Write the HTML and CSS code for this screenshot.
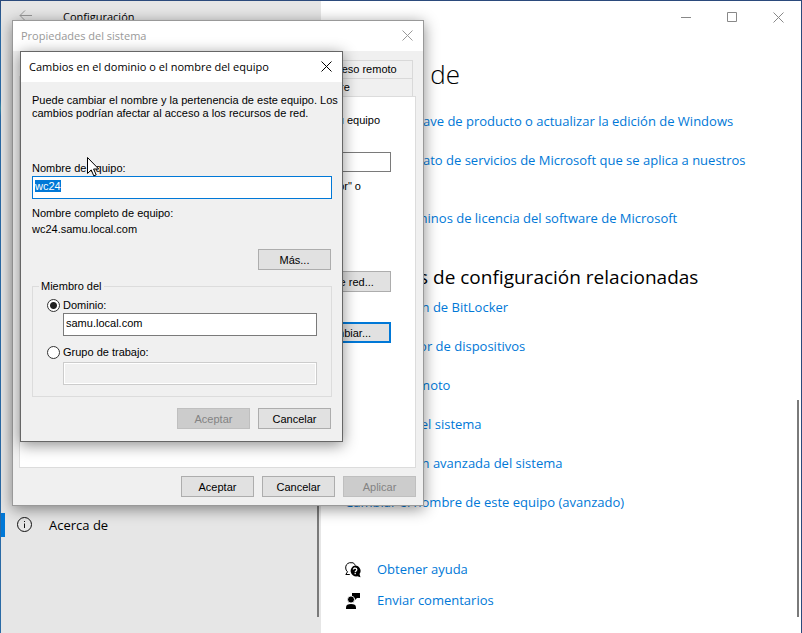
FILE: index.html
```html
<!DOCTYPE html>
<html lang="es">
<head>
<meta charset="utf-8">
<title>Configuración</title>
<link rel="stylesheet" href="styles.css">
</head>
<body>
<div class="settings">
  <aside class="sidebar">
    <div class="sidebar-column">
      <header class="sidebar-title">
        <button class="back" aria-label="Atrás"><svg width="14" height="12" viewBox="0 0 14 12"><path d="M13 5.500H1M6 .5L1 5.500l5 5" fill="none" stroke="#999"/></svg></button>
        <span>Configuración</span>
      </header>
      <nav class="nav">
        <a class="nav-item" href="#acerca">
          <svg width="16" height="16" viewBox="0 0 16 16"><circle cx="7.500" cy="7.500" r="7" fill="none" stroke="#111"/><path d="M7.500 6.500V11M7.500 4v1" stroke="#111"/></svg>
          <span>Acerca de</span>
        </a>
      </nav>
    </div>
    <div class="scroll scroll-nav"></div>
  </aside>

  <main class="main" id="acerca">
    <div class="main-column">
      <div class="window-controls">
        <button aria-label="Minimizar"><svg width="11" height="11" viewBox="0 0 11 11"><path d="M0 5.500h10" stroke="#888"/></svg></button>
        <button aria-label="Maximizar"><svg width="11" height="11" viewBox="0 0 11 11"><path d="M.5 .5h9v9h-9z" fill="none" stroke="#888"/></svg></button>
        <button aria-label="Cerrar"><svg width="11" height="11" viewBox="0 0 11 11"><path d="M.5 .5l10 10M10.500 .5l-10 10" stroke="#888"/></svg></button>
      </div>
      <div class="content">
        <h1>Acerca de</h1>
        <ul class="links">
          <li><a href="#">Cambiar la clave de producto o actualizar la edición de Windows</a></li>
          <li><a href="#">Leer el Contrato de servicios de Microsoft que se aplica a nuestros<br>servicios</a></li>
          <li><a href="#">Leer los Términos de licencia del software de Microsoft</a></li>
        </ul>
        <h2>Opciones de configuración relacionadas</h2>
        <ul class="links">
          <li><a href="#">Configuración de BitLocker</a></li>
          <li><a href="#">Administrador de dispositivos</a></li>
          <li><a href="#">Escritorio remoto</a></li>
          <li><a href="#">Protección del sistema</a></li>
          <li><a href="#">Configuración avanzada del sistema</a></li>
          <li><a href="#">Cambiar el nombre de este equipo (avanzado)</a></li>
        </ul>
        <ul class="support">
          <li>
            <svg width="16" height="16" viewBox="0 0 16 16"><path d="M2.500 9.800A5 5 0 0 1 .7 6 5.300 5.300 0 0 1 10.600 3.200M2.500 9.800L.8 12.500h4" fill="none" stroke="#000"/><path d="M10 3.500a5.400 5.400 0 0 1 4.500 8.600l1 3.200-3.200-1A5.500 5.500 0 1 1 10 3.500z"/><path d="M8.400 7.600c0-2.200 3.400-2 3.400 0 0 1.300-1.600 1.300-1.600 2.600M10.200 11v1.300" fill="none" stroke="#fff" stroke-width="1.300"/></svg>
            <a href="#">Obtener ayuda</a>
          </li>
          <li>
            <svg width="16" height="16" viewBox="0 0 16 16"><path d="M7 0h8v5h-3l-2 2V5H7z"/><circle cx="6" cy="6.500" r="3.500" stroke="#fff" stroke-width=".8"/><path d="M1 16v-1.500C1 11.800 3 11 6 11s5 .8 5 3.500V16z"/></svg>
            <a href="#">Enviar comentarios</a>
          </li>
        </ul>
      </div>
    </div>
    <div class="scroll scroll-page"></div>
  </main>
</div>

<section class="dialog properties" aria-label="Propiedades del sistema">
  <header class="dialog-title">
    <span>Propiedades del sistema</span>
    <button aria-label="Cerrar"><svg width="11" height="11" viewBox="0 0 11 11"><path d="M.5 .5l10 10M10.500 .5l-10 10" stroke="currentColor"/></svg></button>
  </header>
  <div class="properties-body">
    <div class="tabs">
      <div class="tab-row">
        <button class="tab tab-wide">Opciones avanzadas</button>
        <button class="tab tab-wide">Protección del sistema</button>
        <button class="tab tab-remote">Acceso remoto</button>
      </div>
      <div class="tab-row">
        <button class="tab tab-wide tab-selected">Nombre de equipo</button>
        <button class="tab tab-hardware">Hardware</button>
      </div>
    </div>
    <div class="page">
      <p class="page-intro">Windows usa la siguiente información para identificar su equipo<br>en la red.</p>
      <div class="description">
        <label for="desc">Descripción del equipo:</label>
        <input id="desc" class="field" type="text">
      </div>
      <div class="page-example">
        <p>Por ejemplo: "Equipo del comedor" o<br>"Equipo de María".</p>
      </div>
      <div class="page-actions">
        <button class="button button-page">Id. de red...</button>
        <button class="button button-page button-default">Cambiar...</button>
      </div>
    </div>
    <footer class="actions">
      <button class="button">Aceptar</button>
      <button class="button">Cancelar</button>
      <button class="button" disabled>Aplicar</button>
    </footer>
  </div>
</section>

<section class="dialog rename" aria-label="Cambios en el dominio o el nombre del equipo">
  <header class="dialog-title">
    <span>Cambios en el dominio o el nombre del equipo</span>
    <button aria-label="Cerrar"><svg width="11" height="11" viewBox="0 0 11 11"><path d="M.5 .5l10 10M10.500 .5l-10 10" stroke="currentColor"/></svg></button>
  </header>
  <form class="rename-body">
    <p class="rename-intro">Puede cambiar el nombre y la pertenencia de este equipo. Los<br>cambios podrían afectar al acceso a los recursos de red.</p>
    <label class="line" for="name">Nombre de equipo:</label>
    <input id="name" class="field field-active" type="text" value="wc24">
    <div class="full-name">
      <div class="line">Nombre completo de equipo:</div>
      <div class="line">wc24.samu.local.com</div>
    </div>
    <div class="more"><button class="button" type="button">Más...</button></div>
    <fieldset class="member">
      <legend>Miembro del</legend>
      <label class="choice"><input type="radio" name="member" checked>Dominio:</label>
      <input class="field" type="text" value="samu.local.com" aria-label="Dominio">
      <label class="choice choice-next"><input type="radio" name="member">Grupo de trabajo:</label>
      <input class="field" type="text" disabled aria-label="Grupo de trabajo">
    </fieldset>
    <footer class="actions">
      <button class="button" type="button" disabled>Aceptar</button>
      <button class="button" type="button">Cancelar</button>
    </footer>
  </form>
</section>

<svg class="pointer" width="13" height="20" viewBox="0 0 13 20"><path d="M.5 .5v16l3.700-3.600 2.600 6 2.400-1-2.600-5.900h5.100z" fill="#fff" stroke="#000"/></svg>
<script src="main.js"></script>
</body>
</html>
```
FILE: styles.css
```css
* {
  box-sizing: border-box;
}

body {
  margin: 0;
  font-family: "Open Sans", "Noto Sans", sans-serif;
  font-size: 13px;
  line-height: 19px;
  color: #000;
  background: linear-gradient(#2b4a7c 0, #2a6aa5 30px, #2a6aa5 100px, #3a8aa5 108px, #2a6aa5 116px, #2a6aa5 100%);
}

h1, h2, p, ul {
  margin: 0;
  padding: 0;
}

ul {
  list-style: none;
}

button {
  font: inherit;
  color: inherit;
  padding: 0;
  border: 0;
  background: none;
}

svg {
  display: block;
  flex: none;
}

a {
  color: #0078d7;
  text-decoration: none;
}

/* Settings window */
.settings {
  display: flex;
  min-height: 100vh;
  border-left: 1px solid transparent;
  border-top: 1px solid #2b4a7c;
  border-right: 1px solid #2b4a7c;
}

.sidebar {
  display: flex;
  flex: 0 0 320px;
  background: #e6e6e6;
}

.sidebar-column {
  display: flex;
  flex: 1;
  flex-direction: column;
}

.sidebar-title {
  display: flex;
  align-items: center;
  gap: 30px;
  height: 32px;
  padding: 0 0 2px 18px;
  font-size: 11px;
}

.nav {
  margin-top: auto;
  padding-bottom: 88px;
}

.nav-item {
  display: flex;
  align-items: center;
  gap: 16px;
  height: 24px;
  padding-left: 12px;
  border-left: 4px solid #0078d7;
  margin-bottom: 8px;
  color: #000;
}

.scroll {
  flex: none;
  align-self: flex-end;
  width: 2px;
  margin-bottom: 16px;
  background: #7a7a7a;
}

.scroll-nav {
  height: 60%;
  margin-right: 2px;
}

.scroll-page {
  height: 217px;
  margin-right: 2px;
}

.main {
  display: flex;
  flex: 1;
  min-width: 0;
  background: #fff;
}

.main-column {
  flex: 1;
  min-width: 0;
}

.window-controls {
  display: flex;
  justify-content: flex-end;
  height: 32px;
  margin-right: -4px;
}

.window-controls button {
  display: grid;
  place-items: center;
  width: 46px;
}

.content {
  padding: 21px 0 0 24px;
  white-space: nowrap;
}

h1 {
  font-size: 26px;
  line-height: 40px;
  font-weight: 300;
  margin-bottom: 18px;
}

h2 {
  margin: 35px 0 7px;
  font-size: 19px;
  line-height: 28px;
  font-weight: 400;
}

.links {
  display: grid;
  gap: 20px;
}

.support {
  display: grid;
  gap: 12px;
  margin-top: 48px;
}

.support li {
  display: flex;
  align-items: center;
  gap: 16px;
}

/* Dialog windows */
.dialog {
  position: absolute;
  background: #f0f0f0;
  border: 1px solid #999;
  box-shadow: 0 3px 14px rgba(0, 0, 0, .45);
  font-family: "Liberation Sans", sans-serif;
  font-size: 11px;
  line-height: 13px;
}

.dialog-title {
  display: flex;
  align-items: center;
  justify-content: space-between;
  height: 30px;
  padding: 0 10px 2px 8px;
  background: #fff;
  font-family: "Open Sans", "Noto Sans", sans-serif;
  font-size: 11px;
}

.properties {
  left: 12px;
  top: 20px;
  width: 412px;
}

.properties .dialog-title {
  color: #999;
}

.properties-body {
  padding: 9px 7px 8px 6px;
}

.tabs {
  padding: 0 3px 0 2px;
}

.tab-row {
  display: flex;
}

.tab {
  height: 18px;
  border: 1px solid #d9d9d9;
  border-bottom: 0;
}

.tab-wide {
  flex: 1;
}

.tab-remote {
  flex: 0 0 106px;
}

.tab-hardware {
  flex: 0 0 174px;
}

.tab-selected {
  margin: -2px 0 0 -2px;
  height: 20px;
  background: #fff;
}

.page {
  padding: 17px 24px 124px 50px;
  border: 1px solid #dcdcdc;
  background: #fff;
}

.description {
  display: flex;
  align-items: center;
  gap: 12px;
  margin: 12px 0 8px;
}

.description .field {
  flex: 1;
  min-width: 0;
  height: 20px;
}

.page-example {
  display: flex;
  justify-content: flex-end;
  padding-right: 30px;
}

.page-actions {
  display: grid;
  justify-items: end;
  gap: 30px;
  margin-top: 65px;
}

.button {
  width: 73px;
  height: 21px;
  padding-top: 1px;
  border: 1px solid #adadad;
  background: #e1e1e1;
}

.button:disabled {
  border-color: #bfbfbf;
  background: #ccc;
  color: #838383;
}

.button-page {
  width: 90px;
}

.button-default {
  border: 2px solid #0078d7;
}

.actions {
  display: flex;
  justify-content: flex-end;
  gap: 8px;
  padding-top: 8px;
}

.field {
  display: block;
  width: 100%;
  height: 23px;
  padding: 2px 2px 6px;
  border: 1px solid #7a7a7a;
  border-radius: 0;
  outline: 0;
  background: #fff;
  font: inherit;
}

.field:disabled {
  border-color: #ccc;
  background: #f0f0f0;
  box-shadow: inset 0 0 0 1px #fff;
}

.field-active {
  border-color: #0078d7;
}

.field::selection {
  background: #0078d7;
  color: #fff;
}

.rename {
  left: 20px;
  top: 51px;
  width: 323px;
  border-color: #666;
}

.rename-body {
  padding: 12px 10px 12px 11px;
}

.rename-intro {
  margin-bottom: 40px;
  white-space: nowrap;
}

.line {
  display: block;
  line-height: 16px;
}

.full-name {
  padding: 6px 0 12px;
}

.more {
  display: flex;
  justify-content: flex-end;
  padding-right: 1px;
}

.member {
  margin: 10px 0 0;
  padding: 4px 14px 11px 30px;
  border: 1px solid #dcdcdc;
}

.member legend {
  margin-left: -24px;
  padding: 0 2px;
}

.choice {
  display: flex;
  align-items: center;
  gap: 3px;
  height: 16px;
  margin-left: -16px;
}

.choice-next {
  margin-top: 8px;
  margin-bottom: 2px;
}

.choice input {
  appearance: none;
  width: 13px;
  height: 13px;
  margin: 0;
  border: 1px solid #333;
  border-radius: 50%;
  background: #fff;
}

.choice input:checked {
  background: radial-gradient(circle, #222 0 3px, #fff 4px);
}

.rename .actions {
  padding: 11px 1px 0 0;
}

.pointer {
  position: absolute;
  left: 87px;
  top: 157px;
}
```
FILE: main.js
```js
const nameField = document.getElementById("name");
nameField.focus();
nameField.select();
```
